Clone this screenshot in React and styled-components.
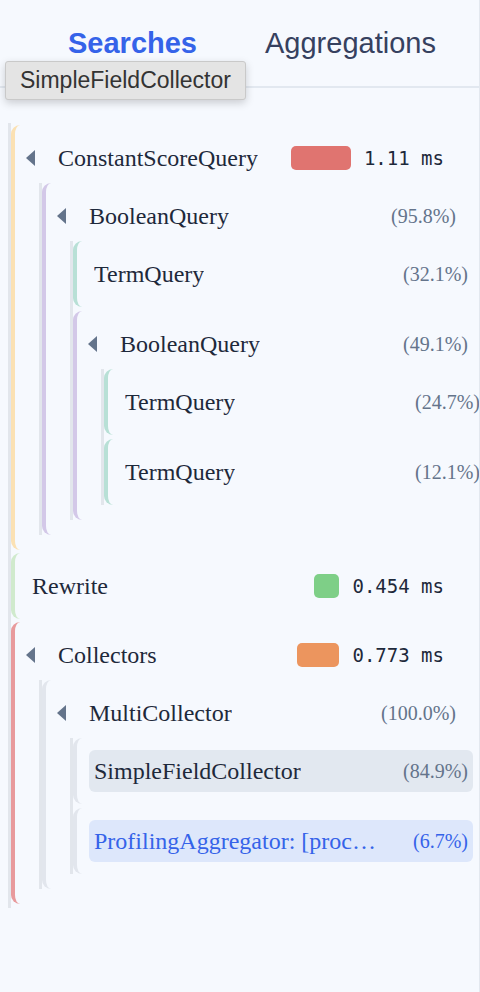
import React from 'react';
import styled, { createGlobalStyle } from 'styled-components';

const GlobalStyle = createGlobalStyle`
    html, body {
        margin: 0;
        padding: 0;
        background: #f6f9fe;
        overflow-x: hidden;
    }
`;

const Page = styled.div`
    position: relative;
    width: 480px;
    min-height: 992px;
    box-sizing: border-box;
    border-right: 1px solid #e3e8ef;
    overflow: hidden;
    background: #f6f9fe;
`;
Page.displayName = 'Page';

const TabBar = styled.div`
    display: flex;
    align-items: center;
    gap: 68px;
    height: 86px;
    padding-left: 68px;
    border-bottom: 2px solid #e2e8f0;
`;
TabBar.displayName = 'TabBar';

const Tab = styled.div`
    font-family: "Liberation Sans", Arial, sans-serif;
    font-size: 29px;
    font-weight: ${({ active }) => active ? 700 : 400};
    color: ${({ active }) => active ? '#3563e9' : '#36415f'};
    white-space: nowrap;
    cursor: pointer;
`;
Tab.displayName = 'Tab';

const Tooltip = styled.div`
    position: absolute;
    left: 5px;
    top: 61px;
    height: 37px;
    padding: 0 14px;
    line-height: 37px;
    background: #e4e4e4;
    border: 1px solid #c9c9c9;
    border-radius: 3px;
    box-shadow: 0 3px 8px rgba(0, 0, 0, .18);
    font-family: "Liberation Sans", Arial, sans-serif;
    font-size: 23px;
    color: #333;
    white-space: nowrap;
`;
Tooltip.displayName = 'Tooltip';

const RootList = styled.ul`
    list-style: none;
    margin: 35px 30px 0 8px;
    padding: 2px 0 4px;
    border-left: 3px solid #e2e6ec;
    display: flex;
    flex-direction: column;
    gap: 3px;
`;
RootList.displayName = 'RootList';

const ChildList = styled.ul`
    list-style: none;
    margin: 0 -12px 3px 24px;
    padding: 0;
    border-left: 3px solid #e2e6ec;
    display: flex;
    flex-direction: column;
    gap: 4px;
`;
ChildList.displayName = 'ChildList';

const Node = styled.li`
    display: flex;
    flex-direction: column;
    gap: 4px;
    padding: 12px 0;
    border-left: 4px solid ${({ color }) => color};
    border-radius: 9px 0 0 9px;
`;
Node.displayName = 'Node';

const rowBackgrounds = {
    hover: '#e2e8f0',
    selected: '#dde7fb'
};

const Row = styled.div`
    display: flex;
    align-items: center;
    height: 42px;
    margin-left: 12px;
    padding: 0 5px;
    border-radius: 6px;
    background: ${({ variant }) => rowBackgrounds[variant] || 'transparent'};
    color: ${({ variant }) => variant === 'selected' ? '#3563e9' : '#1e293b'};
`;
Row.displayName = 'Row';

const Toggle = styled.span`
    flex-shrink: 0;
    width: 32px;
    margin-left: -6px;
    display: flex;
    align-items: center;

    &::before {
        content: '';
        display: block;
        width: 0;
        height: 0;
        border-right: 9px solid #64748b;
        border-top: 8px solid transparent;
        border-bottom: 8px solid transparent;
    }
`;
Toggle.displayName = 'Toggle';

const Name = styled.span`
    min-width: 0;
    font-family: "Liberation Serif", "Times New Roman", serif;
    font-size: 24px;
    white-space: nowrap;
    overflow: hidden;
    text-overflow: ellipsis;
`;
Name.displayName = 'Name';

const Percent = styled.span`
    flex-shrink: 0;
    margin-left: auto;
    padding-left: 30px;
    font-family: "Liberation Serif", "Times New Roman", serif;
    font-size: 20px;
    color: ${({ variant }) => variant === 'selected' ? '#3563e9' : '#64748b'};
`;
Percent.displayName = 'Percent';

const Timing = styled.span`
    flex-shrink: 0;
    margin-left: auto;
    display: flex;
    align-items: center;
    gap: 13px;
`;
Timing.displayName = 'Timing';

const Bar = styled.span`
    height: 24px;
    border-radius: 5px;
    background: ${({ color }) => color};
`;
Bar.displayName = 'Bar';

const Time = styled.span`
    font-family: "DejaVu Sans Mono", "Liberation Mono", monospace;
    font-size: 19px;
    color: #1e293b;
`;
Time.displayName = 'Time';

const YELLOW = '#fbe1b3';
const PURPLE = '#d3c8e8';
const TEAL = '#b8e0d6';
const GRAY = '#e2e6ed';

const tree = [
    {
        name: 'ConstantScoreQuery', color: YELLOW, time: '1.11 ms', ms: 1.11, bar: '#e07470',
        children: [
            {
                name: 'BooleanQuery', color: PURPLE, pct: '(95.8%)',
                children: [
                    { name: 'TermQuery', color: TEAL, pct: '(32.1%)' },
                    {
                        name: 'BooleanQuery', color: PURPLE, pct: '(49.1%)',
                        children: [
                            { name: 'TermQuery', color: TEAL, pct: '(24.7%)' },
                            { name: 'TermQuery', color: TEAL, pct: '(12.1%)' }
                        ]
                    }
                ]
            }
        ]
    },
    { name: 'Rewrite', color: '#d0eacd', time: '0.454 ms', ms: 0.454, bar: '#7ecf87' },
    {
        name: 'Collectors', color: '#e89a9c', time: '0.773 ms', ms: 0.773, bar: '#ec955e',
        children: [
            {
                name: 'MultiCollector', color: GRAY, pct: '(100.0%)',
                children: [
                    { name: 'SimpleFieldCollector', color: GRAY, pct: '(84.9%)', variant: 'hover' },
                    { name: 'ProfilingAggregator: [processor_stats]', color: GRAY, pct: '(6.7%)', variant: 'selected' }
                ]
            }
        ]
    }
];

const maxMs = Math.max(...tree.map(n => n.ms));

const TreeNode = ({ node }) => {
    const hasChildren = node.children && node.children.length > 0;
    return (
        <Node color={node.color}>
            <Row variant={node.variant}>
                {hasChildren && <Toggle />}
                <Name title={node.name}>{node.name}</Name>
                {node.time ? (
                    <Timing>
                        <Bar color={node.bar} style={{ width: Math.round(60 * node.ms / maxMs) }} />
                        <Time>{node.time}</Time>
                    </Timing>
                ) : (
                    <Percent variant={node.variant}>{node.pct}</Percent>
                )}
            </Row>
            {hasChildren && (
                <ChildList>
                    {node.children.map((child, i) => <TreeNode key={i} node={child} />)}
                </ChildList>
            )}
        </Node>
    );
};

const App = () => {
    return (
        <Page>
            <GlobalStyle />
            <TabBar>
                <Tab active>Searches</Tab>
                <Tab>Aggregations</Tab>
            </TabBar>
            <RootList>
                {tree.map((node, i) => <TreeNode key={i} node={node} />)}
            </RootList>
            <Tooltip>SimpleFieldCollector</Tooltip>
        </Page>
    );
};

export default App;
